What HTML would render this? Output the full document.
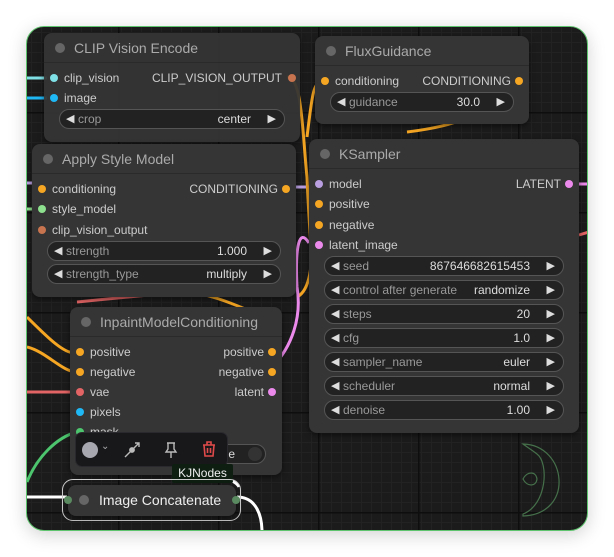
<!DOCTYPE html>
<html><head><meta charset="utf-8"><style>
*{box-sizing:border-box;margin:0;padding:0}
body{width:614px;height:557px;background:#fff;position:relative;overflow:hidden;font-family:"Liberation Sans",Arial,sans-serif}
#cv{position:absolute;left:26px;top:26px;width:562px;height:505px;border:1.5px solid #5fc46e;border-radius:18px;overflow:hidden;
background-color:#1b1b1b;
background-image:linear-gradient(#0e0e0e 1.5px,transparent 1.5px),linear-gradient(90deg,#0e0e0e 1.5px,transparent 1.5px),linear-gradient(#222 1px,transparent 1px),linear-gradient(90deg,#222 1px,transparent 1px);
background-size:100px 100px,100px 100px,10px 10px,10px 10px;background-position:-2px 85px,-9px 0,0 5px,4px 0;
box-shadow:0 4px 18px rgba(0,0,0,.18)}
.n{position:absolute;background:#353535;border-radius:8px;box-shadow:0 2px 6px rgba(0,0,0,.5)}
.t{height:30px;border-bottom:1px solid #2a2a2a;color:#aaa;font-size:14px;line-height:30px;padding-left:30px;position:relative}
.t:before{content:"";position:absolute;left:11px;top:10px;width:10px;height:10px;border-radius:50%;background:#666}
.r{position:absolute;font-size:12px;color:#ccc;height:20px;line-height:20px}
.d{position:absolute;width:8px;height:8px;border-radius:50%;top:6px}
.w{position:absolute;height:20px;border:1px solid #555;background:#222;border-radius:10px;font-size:12px;line-height:18px;color:#999}
.w .l{position:absolute;left:6px;color:#ddd;font-size:11px}
.w .ln{position:absolute;left:18px}
.w .v{position:absolute;right:33px;color:#ddd}
.w .rt{position:absolute;right:8px;color:#ddd;font-size:11px}
</style></head><body>
<div id="cv">
<svg width="562" height="505" style="position:absolute;left:0;top:0" fill="none" stroke-width="3">
<path d="M0 51 H20" stroke="#7fe0e6"/>
<path d="M0 71 H20" stroke="#1fb7f4"/>
<path d="M0 156 H8" stroke="#b99ee0"/>
<path d="M0 182 H8" stroke="#8de08d"/>
<path d="M268 160 H285" stroke="#b99ee0"/>
<path d="M545 157 H562" stroke="#ec8aec"/>
<path d="M552 208 L562 205" stroke="#e36464"/>
<path d="M260 50 C275 50 275 100 280 150 C282 200 285 230 288 280" stroke="#f5a623"/>
<path d="M280 110 C285 70 286 55 295 55" stroke="#f5a623"/>
<path d="M380 105 C420 100 430 95 470 80" stroke="#f5a623"/>
<path d="M270 270 C290 260 283 210 288 175" stroke="#f5a623"/>
<path d="M245 340 C265 320 275 290 270 260 C268 220 272 200 282 216" stroke="#ec8aec"/>
<path d="M0 290 C20 310 40 330 50 325" stroke="#f5a623"/>
<path d="M0 320 C20 325 35 345 50 345" stroke="#f5a623"/>
<path d="M0 365 H50" stroke="#e36464"/>
<path d="M50 275 C150 265 200 260 268 262" stroke="#e36464"/>
<path d="M150 262 C200 270 220 285 240 290" stroke="#f5a623"/>
<path d="M0 455 C10 430 30 410 50 405" stroke="#4cc56e"/>
<path d="M0 470 H40" stroke="#fff"/>
<path d="M210 470 C230 470 235 490 235 505" stroke="#fff"/>
<path d="M200 450 C205 455 210 455 212 460" stroke="#fff"/>
<g stroke="#45704a" stroke-width="1.2"><path d="M496 417 C540 418 548 487 496 489 L496 487 C520 478 522 436 510 427 C505 423 500 420 496 417Z"/><path d="M496 452 C500 444 509 444 510 452 C509 460 500 460 496 452Z"/></g>
</svg>
<div style="position:absolute;left:0;top:0;width:100%;height:100%;transform:translate(-26px,-26px)">
<div class="n" style="left:43px;top:32px;width:256px;height:109px;background:rgba(53,53,53,.95)">
<div class="t">CLIP Vision Encode</div>
<div class="d" style="left:6px;top:41px;background:#7fe0e6"></div><div class="r" style="left:20px;top:35px">clip_vision</div>
<div class="d" style="left:6px;top:61px;background:#1fb7f4"></div><div class="r" style="left:20px;top:55px">image</div>
<div class="r" style="right:18px;top:35px">CLIP_VISION_OUTPUT</div><div class="d" style="right:4px;top:41px;background:#c8744e"></div>
<div class="w" style="left:15px;top:76px;width:226px"><span class="l">◀</span><span class="ln">crop</span><span class="v">center</span><span class="rt">▶</span></div>
</div>
<div class="n" style="left:314px;top:35px;width:214px;height:88px">
<div class="t">FluxGuidance</div>
<div class="d" style="left:6px;top:41px;background:#f5a623"></div><div class="r" style="left:20px;top:35px">conditioning</div>
<div class="r" style="right:18px;top:35px">CONDITIONING</div><div class="d" style="right:6px;top:41px;background:#f5a623"></div>
<div class="w" style="left:15px;top:56px;width:184px"><span class="l">◀</span><span class="ln">guidance</span><span class="v">30.0</span><span class="rt">▶</span></div>
</div>
<div class="n" style="left:31px;top:143px;width:264px;height:153px">
<div class="t">Apply Style Model</div>
<div class="d" style="left:6px;top:41px;background:#f5a623"></div><div class="r" style="left:20px;top:35px">conditioning</div>
<div class="d" style="left:6px;top:61px;background:#8de08d"></div><div class="r" style="left:20px;top:55px">style_model</div>
<div class="d" style="left:6px;top:82px;background:#c8744e"></div><div class="r" style="left:20px;top:76px">clip_vision_output</div>
<div class="r" style="right:18px;top:35px">CONDITIONING</div><div class="d" style="right:6px;top:41px;background:#f5a623"></div>
<div class="w" style="left:15px;top:97px;width:234px"><span class="l">◀</span><span class="ln">strength</span><span class="v">1.000</span><span class="rt">▶</span></div>
<div class="w" style="left:15px;top:120px;width:234px"><span class="l">◀</span><span class="ln">strength_type</span><span class="v">multiply</span><span class="rt">▶</span></div>
</div>
<div class="n" style="left:308px;top:138px;width:270px;height:294px">
<div class="t">KSampler</div>
<div class="d" style="left:6px;top:41px;background:#b99ee0"></div><div class="r" style="left:20px;top:35px">model</div>
<div class="d" style="left:6px;top:61px;background:#f5a623"></div><div class="r" style="left:20px;top:55px">positive</div>
<div class="d" style="left:6px;top:82px;background:#f5a623"></div><div class="r" style="left:20px;top:76px">negative</div>
<div class="d" style="left:6px;top:102px;background:#ec8aec"></div><div class="r" style="left:20px;top:96px">latent_image</div>
<div class="r" style="right:18px;top:35px">LATENT</div><div class="d" style="right:6px;top:41px;background:#ec8aec"></div>
<div class="w" style="left:15px;top:117px;width:240px"><span class="l">◀</span><span class="ln">seed</span><span class="v">867646682615453</span><span class="rt">▶</span></div>
<div class="w" style="left:15px;top:141px;width:240px"><span class="l">◀</span><span class="ln">control after generate</span><span class="v">randomize</span><span class="rt">▶</span></div>
<div class="w" style="left:15px;top:165px;width:240px"><span class="l">◀</span><span class="ln">steps</span><span class="v">20</span><span class="rt">▶</span></div>
<div class="w" style="left:15px;top:189px;width:240px"><span class="l">◀</span><span class="ln">cfg</span><span class="v">1.0</span><span class="rt">▶</span></div>
<div class="w" style="left:15px;top:213px;width:240px"><span class="l">◀</span><span class="ln">sampler_name</span><span class="v">euler</span><span class="rt">▶</span></div>
<div class="w" style="left:15px;top:237px;width:240px"><span class="l">◀</span><span class="ln">scheduler</span><span class="v">normal</span><span class="rt">▶</span></div>
<div class="w" style="left:15px;top:261px;width:240px"><span class="l">◀</span><span class="ln">denoise</span><span class="v">1.00</span><span class="rt">▶</span></div>
</div>
<div class="n" style="left:69px;top:306px;width:212px;height:168px">
<div class="t">InpaintModelConditioning</div>
<div class="d" style="left:6px;top:41px;background:#f5a623"></div><div class="r" style="left:20px;top:35px">positive</div>
<div class="d" style="left:6px;top:61px;background:#f5a623"></div><div class="r" style="left:20px;top:55px">negative</div>
<div class="d" style="left:6px;top:81px;background:#e36464"></div><div class="r" style="left:20px;top:75px">vae</div>
<div class="d" style="left:6px;top:101px;background:#1fb7f4"></div><div class="r" style="left:20px;top:95px">pixels</div>
<div class="d" style="left:6px;top:121px;background:#4cc56e"></div><div class="r" style="left:20px;top:115px">mask</div>
<div class="r" style="right:18px;top:35px">positive</div><div class="d" style="right:6px;top:41px;background:#f5a623"></div>
<div class="r" style="right:18px;top:55px">negative</div><div class="d" style="right:6px;top:61px;background:#f5a623"></div>
<div class="r" style="right:18px;top:75px">latent</div><div class="d" style="right:6px;top:81px;background:#ec8aec"></div>
<div class="w" style="left:100px;top:137px;width:96px"><span class="v" style="right:30px">se</span><span style="position:absolute;right:3px;top:2px;width:14px;height:14px;border-radius:50%;background:#333"></span></div>
</div>
<div style="position:absolute;left:74px;top:431px;width:153px;height:35px;background:#18181b;border-radius:7px;border:1px solid #2a2a2e">
<div style="position:absolute;left:6px;top:9px;width:16px;height:16px;border-radius:50%;background:#a7a7b0"></div>
<span style="position:absolute;left:25px;top:8px;color:#aaa;font-size:10px">⌄</span>
<svg style="position:absolute;left:47px;top:8px" width="18" height="18" fill="none" stroke="#bbb" stroke-width="1.4"><path d="M2 16 L8 10 M10 8 L16 2 M12 2 H16 V6"/><circle cx="9" cy="9" r="2.2" fill="#bbb"/></svg>
<svg style="position:absolute;left:87px;top:8px" width="16" height="18" fill="none" stroke="#bbb" stroke-width="1.4"><path d="M4 2 H12 M5 2 V8 L3 11 H13 L11 8 V2 M8 11 V17"/></svg>
<svg style="position:absolute;left:125px;top:7px" width="16" height="18" fill="none" stroke="#e04a4a" stroke-width="1.6"><path d="M2 5 H14 M6 5 V2 H10 V5 M3 5 L4 16 H12 L13 5 M6.5 8 V13 M9.5 8 V13"/></svg>
</div>
<div style="position:absolute;left:171px;top:463px;width:61px;height:19px;background:#0e1f12;color:#eee;font-size:12px;line-height:19px;text-align:center;border-radius:2px">KJNodes</div>
<div style="position:absolute;left:61px;top:478px;width:179px;height:42px;border:1.5px solid #ccc;border-radius:11px"></div>
<div class="n" style="left:67px;top:484px;width:168px;height:31px">
<div class="t" style="border:0;color:#eee;font-size:14px;padding-left:31px;line-height:31px">Image Concatenate</div>
<div class="d" style="left:-4px;top:11px;background:#5a8a60"></div>
<div class="d" style="right:-4px;top:11px;background:#5a8a60"></div>
</div>
</div>
</div>
</body></html>
